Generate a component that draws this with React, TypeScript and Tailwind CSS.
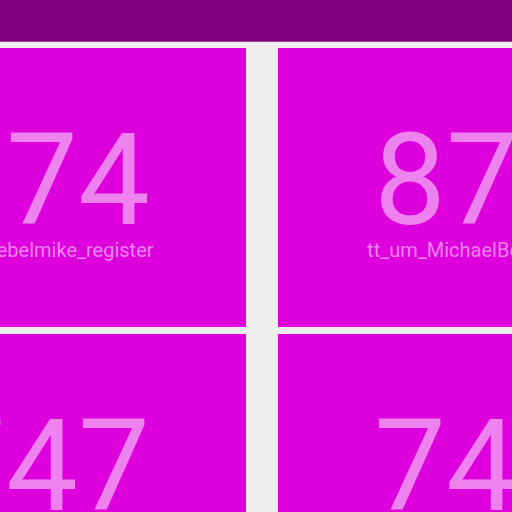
import React from "react";

const tiles = [
  { value: "374", name: "tt_um_rebelmike_register" },
  { value: "874", name: "tt_um_MichaelBell_tinyQV" },
  { value: "747", name: "tt_um_rebelmike_incrementer" },
  { value: "748", name: "tt_um_MichaelBell_nanoV" },
];

function Tile({ value, name }: { value: string; name: string }) {
  return (
    <div className="h-[279px] bg-[#dd00dd] flex flex-col items-center pt-[68px] text-[#ee82ee]">
      <div className="text-[128px] leading-none">{value}</div>
      <div className="text-[20px] leading-none -mt-[4px] whitespace-nowrap">{name}</div>
    </div>
  );
}

export default function App() {
  return (
    <div
      className="w-[512px] h-[512px] overflow-hidden bg-[#eeeeee]"
      style={{ fontFamily: "Roboto, 'Liberation Sans', sans-serif" }}
    >
      <header className="h-[42px] bg-[#800080] border-b border-[#a43ca4]" />
      <div className="ml-[-162px] mt-[6px] grid grid-cols-[408px_408px] gap-x-[32px] gap-y-[7px]">
        {tiles.map((t) => (
          <Tile key={t.name} value={t.value} name={t.name} />
        ))}
      </div>
    </div>
  );
}
